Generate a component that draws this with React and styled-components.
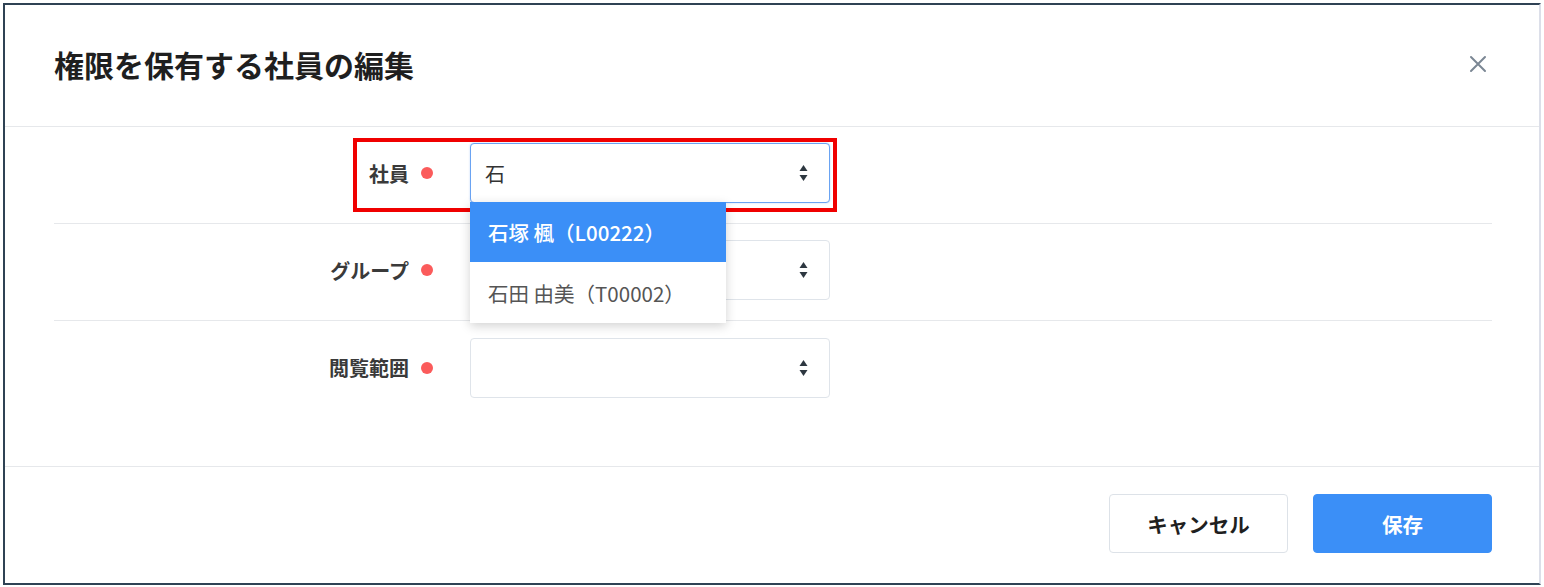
import React from 'react';
import styled, { createGlobalStyle } from 'styled-components';

const GlobalStyle = createGlobalStyle`
  html, body {
    margin: 0;
    padding: 0;
    background: #ffffff;
  }
  body {
    font-family: "Noto Sans CJK JP", "Noto Sans", sans-serif;
    color: #333;
  }
`;

const Frame = styled.div`
  margin: 3px 3px 0 3px;
  width: 1534px;
  height: 578px;
  border-top: 2px solid #2f4254;
  border-left: 2px solid #2f4254;
  border-bottom: 2px solid #2f4254;
  border-right: 2px solid #dcdfe9;
  display: flex;
  flex-direction: column;
  background: #fff;
`;

const Header = styled.div`
  height: 122px;
  flex-shrink: 0;
  box-sizing: border-box;
  border-bottom: 1px solid #e6e8eb;
  display: flex;
  align-items: center;
  justify-content: space-between;
  padding: 0 52px 3px 49px;
`;

const Title = styled.h2`
  margin: 0;
  font-size: 30px;
  font-weight: 700;
  color: #1f1f1f;
`;

const CloseButton = styled.button`
  border: none;
  background: none;
  padding: 0;
  width: 18px;
  height: 18px;
  display: flex;
  cursor: pointer;
`;

const Body = styled.div`
  padding: 0 47px 48px 49px;
  border-bottom: 1px solid #e6e8eb;
`;

const Row = styled.div`
  position: relative;
  height: 97px;
  box-sizing: border-box;
  padding-bottom: 4px;
  display: grid;
  grid-template-columns: 367px 12px 397px;
  align-items: center;
  border-bottom: ${(p) => (p.last ? 'none' : '1px solid #e6e8eb')};
`;

const Label = styled.label`
  text-align: right;
  font-size: 20px;
  font-weight: 700;
  color: #3a3a3a;
  padding-right: 12px;
`;

const Required = styled.span`
  width: 12px;
  height: 12px;
  border-radius: 50%;
  background: #fb5b5b;
`;

const SelectWrap = styled.div`
  position: relative;
  margin-left: 37px;
  width: 360px;
`;

const SelectBox = styled.div`
  box-sizing: border-box;
  width: 360px;
  height: 60px;
  border-radius: 4px;
  border: ${(p) => (p.focused ? '1.5px solid #6aa3f2' : '1px solid #dfe4ea')};
  box-shadow: ${(p) => (p.focused ? '0 0 2px rgba(93,156,240,0.45)' : 'none')};
  display: flex;
  align-items: center;
  justify-content: space-between;
  padding: 0 21px 0 14px;
  font-size: 20px;
  color: #333;
  background: #fff;
`;

const Menu = styled.ul`
  position: absolute;
  left: 0;
  top: 59px;
  width: 256px;
  margin: 0;
  padding: 0;
  list-style: none;
  background: #fff;
  box-shadow: 0 3px 10px rgba(0, 0, 0, 0.18);
  z-index: 5;
`;

const MenuItem = styled.li`
  height: ${(p) => (p.active ? '60px' : '61px')};
  display: flex;
  align-items: center;
  padding-left: 18px;
  font-size: 20.5px;
  font-weight: ${(p) => (p.active ? 500 : 400)};
  background: ${(p) => (p.active ? '#3b8ff7' : '#fff')};
  color: ${(p) => (p.active ? '#fff' : '#555')};
`;

const Annotation = styled.div`
  position: absolute;
  left: 299px;
  top: 11px;
  width: 484px;
  height: 74px;
  box-sizing: border-box;
  border: 4px solid #f00000;
  pointer-events: none;
  z-index: 4;
`;

const Footer = styled.div`
  flex: 1;
  display: flex;
  justify-content: flex-end;
  align-items: flex-start;
  gap: 25px;
  padding: 27px 47px 0 0;
`;

const Button = styled.button`
  width: 179px;
  height: 59px;
  border-radius: 4px;
  font-family: "Noto Sans CJK JP", "Noto Sans", sans-serif;
  font-size: 20.5px;
  font-weight: 700;
  cursor: pointer;
  border: ${(p) => (p.primary ? '1px solid #3b8ff7' : '1px solid #dde2e8')};
  background: ${(p) => (p.primary ? '#3b8ff7' : '#fff')};
  color: ${(p) => (p.primary ? '#fff' : '#1f1f1f')};
`;

function SortIcon() {
  return (
    <svg width="9" height="18" viewBox="0 0 9 18">
      <path d="M4.5 1 L8.5 7 L0.5 7 Z" fill="#2d3740" />
      <path d="M0.5 11 L8.5 11 L4.5 17 Z" fill="#2d3740" />
    </svg>
  );
}

function CloseIcon() {
  return (
    <svg width="18" height="18" viewBox="0 0 18 18">
      <path d="M2 2 L16 16 M16 2 L2 16" stroke="#7b8794" strokeWidth="2" strokeLinecap="round" />
    </svg>
  );
}

const options = [
  { label: '石塚 楓（L00222）', active: true },
  { label: '石田 由美（T00002）', active: false },
];

export default function App() {
  return (
    <>
      <GlobalStyle />
      <Frame>
        <Header>
          <Title>権限を保有する社員の編集</Title>
          <CloseButton aria-label="close">
            <CloseIcon />
          </CloseButton>
        </Header>

        <Body>
          <Row>
            <Label>社員</Label>
            <Required />
            <SelectWrap>
              <SelectBox focused>
                <span>石</span>
                <SortIcon />
              </SelectBox>
              <Menu>
                {options.map((o) => (
                  <MenuItem key={o.label} active={o.active}>
                    {o.label}
                  </MenuItem>
                ))}
              </Menu>
            </SelectWrap>
            <Annotation />
          </Row>
          <Row>
            <Label>グループ</Label>
            <Required />
            <SelectWrap>
              <SelectBox>
                <span />
                <SortIcon />
              </SelectBox>
            </SelectWrap>
          </Row>
          <Row last>
            <Label>閲覧範囲</Label>
            <Required />
            <SelectWrap>
              <SelectBox>
                <span />
                <SortIcon />
              </SelectBox>
            </SelectWrap>
          </Row>
        </Body>

        <Footer>
          <Button>キャンセル</Button>
          <Button primary>保存</Button>
        </Footer>
      </Frame>
    </>
  );
}
